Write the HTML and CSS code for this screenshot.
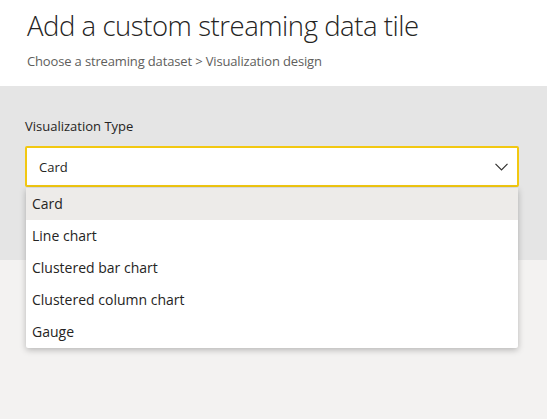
FILE: index.html
```html
<!DOCTYPE html>
<html>
<head>
<meta charset="utf-8">
<link rel="stylesheet" href="styles.css">
</head>
<body>
<header class="header">
  <h1 class="title">Add a custom streaming data tile</h1>
  <div class="crumb">Choose a streaming dataset &gt; Visualization design</div>
</header>
<section class="band">
  <div class="label">Visualization Type</div>
  <div class="select-wrap">
    <div class="select">
      <span class="select-value">Card</span>
      <svg class="chev" width="13" height="8" viewBox="0 0 13 8"><path d="M0.5 0.8 L6.5 6.8 L12.5 0.8" fill="none" stroke="#323130" stroke-width="1.2"/></svg>
    </div>
    <ul class="menu">
      <li class="item selected">Card</li>
      <li class="item">Line chart</li>
      <li class="item">Clustered bar chart</li>
      <li class="item">Clustered column chart</li>
      <li class="item">Gauge</li>
    </ul>
  </div>
</section>
<section class="rest"></section>
</body>
</html>
```
FILE: styles.css
```css
html, body {
  margin: 0;
  padding: 0;
  background: #f3f2f1;
  font-family: "Open Sans", "Noto Sans", sans-serif;
  color: #252423;
}
.header {
  background: #ffffff;
  height: 86px;
  padding: 0 27px;
  box-sizing: border-box;
  overflow: hidden;
}
.title {
  margin: 0;
  padding-top: 6px;
  font-size: 27.5px;
  font-weight: 300;
  line-height: 40px;
  color: #252423;
  letter-spacing: -0.45px;
}
.crumb {
  margin-top: 6px;
  font-size: 13px;
  line-height: 18px;
  color: #605e5c;
  letter-spacing: -0.15px;
}
.band {
  background: #e5e5e5;
  height: 174px;
  padding: 31px 28px 0 25px;
  box-sizing: border-box;
}
.label {
  font-size: 13px;
  line-height: 18px;
  color: #252423;
  margin-bottom: 11px;
}
.select-wrap {
  position: relative;
}
.select {
  height: 41px;
  box-sizing: border-box;
  border: 2px solid #f2c811;
  border-radius: 2px;
  background: #ffffff;
  display: flex;
  align-items: center;
  justify-content: space-between;
  padding: 0 9px 0 12px;
}
.select-value {
  font-size: 13px;
  color: #252423;
}
.chev {
  display: block;
}
.menu {
  position: absolute;
  left: 1px;
  right: 1px;
  top: 42px;
  margin: 0;
  padding: 0;
  list-style: none;
  background: #ffffff;
  box-shadow: 0 2px 6px rgba(0,0,0,0.25);
  border-radius: 0 0 2px 2px;
}
.item {
  height: 32px;
  line-height: 31px;
  padding-left: 6px;
  font-size: 14px;
  color: #252423;
}
.item.selected {
  background: #edebe9;
}
.rest {
  height: 159px;
}
```
